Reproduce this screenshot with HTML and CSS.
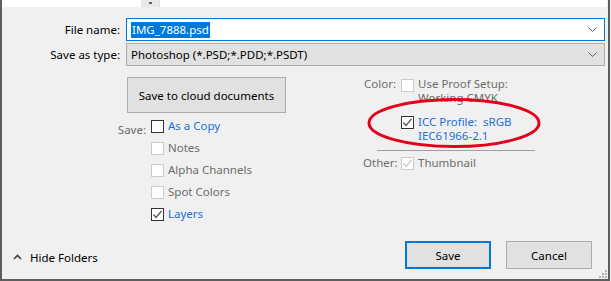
FILE: index.html
```html
<!DOCTYPE html>
<html>
<head>
<meta charset="utf-8">
<link rel="stylesheet" href="styles.css">
</head>
<body>
<div class="window">
  <div class="top-strip">
    <div class="pane-left"></div>
    <div class="scroll-stub"><span class="stub-arrow"></span></div>
    <div class="pane-right"></div>
  </div>

  <div class="form-row first">
    <label class="row-label">File name:</label>
    <div class="field input-field">
      <span class="selected">IMG_7888.psd</span>
      <svg class="chev" width="9" height="5" viewBox="0 0 9 5"><polyline points="0.5,0.5 4.5,4.5 8.5,0.5" fill="none" stroke="#606060" stroke-width="1"/></svg>
    </div>
  </div>
  <div class="form-row second">
    <label class="row-label">Save as type:</label>
    <div class="field select-field">
      <span>Photoshop (*.PSD;*.PDD;*.PSDT)</span>
      <svg class="chev" width="9" height="5" viewBox="0 0 9 5"><polyline points="0.5,0.5 4.5,4.5 8.5,0.5" fill="none" stroke="#606060" stroke-width="1"/></svg>
    </div>
  </div>

  <div class="main">
    <div class="left-col">
      <button class="btn cloud-btn">Save to cloud documents</button>
      <div class="opt-grid save-grid">
        <span class="opt-label">Save:</span>
        <div class="opt"><span class="cb"></span><span class="blue">As a Copy</span></div>
        <span></span>
        <div class="opt"><span class="cb disabled"></span><span class="gray">Notes</span></div>
        <span></span>
        <div class="opt"><span class="cb disabled"></span><span class="gray">Alpha Channels</span></div>
        <span></span>
        <div class="opt"><span class="cb disabled"></span><span class="gray">Spot Colors</span></div>
        <span></span>
        <div class="opt"><span class="cb checked"><svg width="11" height="11" viewBox="0 0 11 11"><polyline points="1.5,5.5 4,8.5 9.5,2" fill="none" stroke="#505050" stroke-width="1.2"/></svg></span><span class="blue">Layers</span></div>
      </div>
    </div>

    <div class="right-col">
      <div class="opt-grid color-grid">
        <span class="opt-label">Color:</span>
        <div class="opt multi"><span class="cb disabled"></span><span class="gray">Use Proof Setup:<br>Working CMYK</span></div>
        <span></span>
        <div class="opt multi icc"><span class="cb checked"><svg width="11" height="11" viewBox="0 0 11 11"><polyline points="1.5,5.5 4,8.5 9.5,2" fill="none" stroke="#505050" stroke-width="1.2"/></svg></span><span class="blue">ICC Profile:&nbsp; sRGB<br>IEC61966-2.1</span></div>
      </div>
      <div class="separator"></div>
      <div class="opt-grid other-grid">
        <span class="opt-label">Other:</span>
        <div class="opt"><span class="cb disabled"><svg width="11" height="11" viewBox="0 0 11 11"><polyline points="1.5,5.5 4,8.5 9.5,2" fill="none" stroke="#c8c8c8" stroke-width="1.2"/></svg></span><span class="gray">Thumbnail</span></div>
      </div>
    </div>
  </div>

  <div class="bottom-bar">
    <div class="hide-folders">
      <svg width="9" height="6" viewBox="0 0 9 6"><polyline points="1,5 4.5,1.5 8,5" fill="none" stroke="#404040" stroke-width="1.6"/></svg>
      <span>Hide Folders</span>
    </div>
    <div class="buttons">
      <button class="btn dlg-btn default">Save</button>
      <button class="btn dlg-btn">Cancel</button>
    </div>
  </div>

  <svg class="ellipse" width="180" height="54" viewBox="0 0 180 54"><ellipse cx="90" cy="27" rx="85" ry="23.5" fill="none" stroke="#e3001b" stroke-width="3"/></svg>
  <svg class="grip" width="8" height="8" viewBox="0 0 8 8" fill="#b4b4b4"><rect x="6" y="0" width="2" height="2"/><rect x="3" y="3" width="2" height="2"/><rect x="6" y="3" width="2" height="2"/><rect x="0" y="6" width="2" height="2"/><rect x="3" y="6" width="2" height="2"/><rect x="6" y="6" width="2" height="2"/></svg>
</div>
</body>
</html>
```

FILE: styles.css
```css
* { box-sizing: border-box; }
html, body { margin: 0; padding: 0; background: #f0f0f0; }
body {
  font-family: "Segoe UI", "Noto Sans", "Open Sans", sans-serif;
  font-size: 11.5px;
  color: #000;
}
.window {
  position: relative;
  width: 610px;
  height: 281px;
  background: #f0f0f0;
  border-left: 2px solid #5e5e5e;
  border-right: 2px solid #5e5e5e;
  border-bottom: 2px solid #5e5e5e;
  display: flex;
  flex-direction: column;
}
.top-strip { height: 7px; display: flex; }
.pane-left { width: 139px; background: #fff; }
.scroll-stub { width: 18px; background: #e8e8e8; position: relative; display: flex; justify-content: center; }
.stub-arrow { width: 3px; height: 2px; background: #606060; margin-top: 2px; }
.pane-right { flex: 1; background: #fff; border-left: 1px solid #e0e0e0; margin-right: 1px; }

.form-row { display: flex; align-items: center; height: 23px; }
.form-row.first { margin-top: 11px; }
.form-row.second { margin-top: 2px; }
.row-label { width: 118px; text-align: right; margin-right: 6px; }
.field {
  width: 479px;
  height: 23px;
  display: flex;
  align-items: center;
  justify-content: space-between;
  padding: 0 7px 0 4px;
}
.input-field { background: #fff; border: 1px solid #0078d7; }
.select-field { background: #e1e1e1; border: 1px solid #adadad; }
.selected { background: #0078d7; color: #fff; line-height: 16px; padding: 0 1px; }

.main { display: flex; margin-top: 11px; }
.left-col { width: 362px; display: flex; flex-direction: column; }
.btn {
  font-family: inherit;
  font-size: 11.5px;
  color: #000;
  background: #e1e1e1;
  border: 1px solid #adadad;
  padding: 0;
}
.cloud-btn { width: 159px; height: 36px; margin-left: 125px; }

.opt-grid { display: grid; align-items: start; }
.save-grid { grid-template-columns: 149px auto; margin-top: 6px; grid-auto-rows: 22px; }
.save-grid .opt-label { align-self: center; }
.opt-label { text-align: right; padding-right: 5px; color: #6d6d6d; line-height: 14px; }
.opt { display: flex; align-items: center; line-height: 14px; }
.opt.multi { align-items: flex-start; }
.opt.multi .cb { margin-top: 2px; }
.cb {
  width: 13px; height: 13px;
  border: 1px solid #333;
  background: #fff;
  margin-right: 4px;
  flex: none;
  display: flex; align-items: center; justify-content: center;
}
.cb.disabled { border-color: #cccccc; }
.cb svg { display: block; }
.blue { color: #1a6fd8; }
.gray { color: #6d6d6d; }

.right-col { display: flex; flex-direction: column; }
.color-grid { grid-template-columns: 37px auto; row-gap: 10px; }
.opt.multi.icc .cb { margin-top: 1px; }
.separator { width: 158px; height: 1px; background: #a0a0a0; margin: 7px 0 0 13px; }
.other-grid { grid-template-columns: 38px auto; margin-top: 5px; margin-left: -1px; }

.bottom-bar {
  margin-top: auto;
  display: flex;
  justify-content: space-between;
  align-items: center;
  padding: 0 16px 10px 11px;
}
.hide-folders { display: flex; align-items: center; gap: 8px; margin-top: 4px; }
.buttons { display: flex; gap: 15px; }
.dlg-btn { width: 86px; height: 28px; }
.dlg-btn.default { border: 2px solid #0078d7; }

.ellipse { position: absolute; left: 362px; top: 96px; }
.grip { position: absolute; right: 1px; bottom: 1px; }
```
